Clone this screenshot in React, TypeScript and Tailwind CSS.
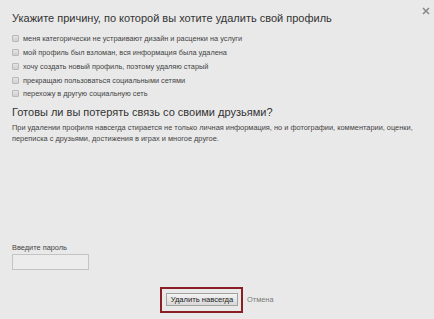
import React from "react";

const reasons = [
  "меня категорически не устраивают дизайн и расценки на услуги",
  "мой профиль был взломан, вся информация была удалена",
  "хочу создать новый профиль, поэтому удаляю старый",
  "прекращаю пользоваться социальными сетями",
  "перехожу в другую социальную сеть",
];

export default function App() {
  return (
    <div
      className="relative w-[434px] h-[319px] overflow-hidden bg-[#e9e9e9] pl-[12px] pt-[12px] text-[#333]"
      style={{ fontFamily: '"Liberation Sans", Arial, sans-serif' }}
    >
      <button className="absolute left-[421px] top-[6px] w-[9px] h-[9px] flex items-center justify-center">
        <svg width="8" height="8" viewBox="0 0 8 8">
          <path d="M1 1 L7 7 M7 1 L1 7" stroke="#8a8a8a" strokeWidth="1.6" />
        </svg>
      </button>

      <h1 className="text-[11px] leading-[12px] text-[#333]">
        Укажите причину, по которой вы хотите удалить свой профиль
      </h1>

      <div className="mt-[8px] flex flex-col">
        {reasons.map((r) => (
          <label key={r} className="flex items-center h-[13.75px] gap-[4px]">
            <span className="w-[7px] h-[7px] rounded-[1px] border border-[#b9b9b9] bg-gradient-to-b from-[#e4e4e4] to-[#cfcfcf]" />
            <span className="text-[7.35px] leading-[9px] text-[#444]">{r}</span>
          </label>
        ))}
      </div>

      <h2 className="mt-[5px] text-[11px] leading-[12px] text-[#333]">
        Готовы ли вы потерять связь со своими друзьями?
      </h2>

      <p className="mt-[4.5px] text-[7.4px] leading-[11px] text-[#444] w-[412px]">
        При удалении профиля навсегда стирается не только личная информация, но и фотографии, комментарии, оценки,
        переписка с друзьями, достижения в играх и многое другое.
      </p>

      <div className="mt-[99px] text-[7.4px] leading-[9px] text-[#444]">Введите пароль</div>
      <div className="mt-[1.5px] w-[77px] h-[16px] border border-[#c4c4c4] bg-[#ececec]" />

      <div className="mt-[17px] ml-[148px] flex items-center">
        <div className="border-2 border-[#8b1d24] pl-[4px] pr-[3px] pt-[4px] pb-[5px]">
          <div className="w-[72px] h-[13px] flex items-center justify-center border border-[#a2a2a2] bg-gradient-to-b from-[#f3f3f3] to-[#d8d8d8] text-[7.6px] text-[#222]">
            Удалить навсегда
          </div>
        </div>
        <span className="ml-[4px] text-[7.4px] text-[#7a7a7a]">Отмена</span>
      </div>
    </div>
  );
}
